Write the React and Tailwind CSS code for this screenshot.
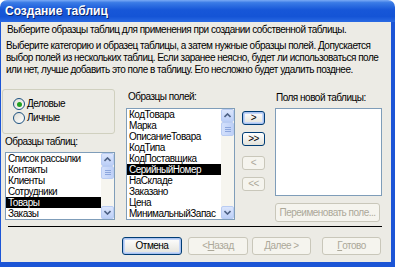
const FONT = "font-['Liberation_Sans',Arial,sans-serif]";

function Arrow({ up }) {
  return (
    <div className="flex h-[13px] w-[13px] items-center justify-center rounded-[2px] border border-[#B9CCF3] bg-[linear-gradient(to_bottom,#DCE6FC,#BCCFF7)]">
      <svg width="7" height="5" viewBox="0 0 7 5">
        <path
          d={up ? "M0.5 4 L3.5 1 L6.5 4" : "M0.5 1 L3.5 4 L6.5 1"}
          fill="none"
          stroke="#4D6185"
          strokeWidth="1.6"
        />
      </svg>
    </div>
  );
}

function ScrollBar({ thumb }) {
  return (
    <div className="flex h-full w-[13px] shrink-0 flex-col bg-[#F6F5EF]">
      <Arrow up />
      <div
        className="flex flex-col items-center justify-center gap-[1px] rounded-[2px] border border-[#B9CCF3] bg-[linear-gradient(to_right,#D3E0FB,#BED0F7)]"
        style={{ height: thumb }}
      >
        <div className="h-px w-[6px] bg-[#8CA6DD]" />
        <div className="h-px w-[6px] bg-[#8CA6DD]" />
        <div className="h-px w-[6px] bg-[#8CA6DD]" />
      </div>
      <div className="flex-1" />
      <Arrow />
    </div>
  );
}

function ListBox({ items, selected, thumb, className }) {
  return (
    <div className={`flex overflow-hidden border border-[#7F9DB9] bg-white ${className}`}>
      <div className="flex-1 overflow-hidden">
        {items.map((t, i) => (
          <div
            key={t}
            className={`h-[11px] whitespace-nowrap pl-[2px] leading-[11px] ${
              i === selected ? "bg-black text-white" : "text-black"
            }`}
          >
            {t}
          </div>
        ))}
      </div>
      {thumb && <ScrollBar thumb={thumb} />}
    </div>
  );
}

function Btn({ children, disabled, focus, className = "" }) {
  const base = "flex items-center justify-center whitespace-nowrap rounded-[3px] border leading-none";
  const look = disabled
    ? "border-[#C9C7BA] bg-[#F5F4EE] text-[#ACA899]"
    : focus
    ? "border-[#003C74] bg-[linear-gradient(to_bottom,#FFFFFF,#E3E2DA)] text-black shadow-[inset_0_0_0_1px_#A8C2F0,inset_0_0_0_2px_#C6D7F8]"
    : "border-[#003C74] bg-[linear-gradient(to_bottom,#FFFFFF,#E3E2DA)] text-black";
  return <div className={`${base} ${look} ${className}`}>{children}</div>;
}

function Radio({ checked, label }) {
  return (
    <div className="flex h-[14px] items-center">
      <div className="ml-[10px] flex h-[12px] w-[12px] items-center justify-center rounded-full border border-[#1C5180] bg-[linear-gradient(135deg,#DCDCD5,#FFFFFF)]">
        {checked && <div className="h-[5px] w-[5px] rounded-full bg-[#21A121]" />}
      </div>
      <span className="ml-[2px]">{label}</span>
    </div>
  );
}

export default function App() {
  return (
    <div className={`flex h-[267px] w-[395px] flex-col overflow-hidden ${FONT} text-black`}>
      <div className="flex h-[22px] shrink-0 items-center rounded-t-[7px] bg-[linear-gradient(to_bottom,#7AAAF5_0%,#3A7BE6_12%,#1757D8_45%,#1454D6_75%,#2A6AE3_100%)] pl-[5px]">
        <span className="text-[12px] font-bold text-white [text-shadow:1px_1px_0_#0A246A]">
          Создание таблиц
        </span>
      </div>
      <div className="flex flex-1 flex-col overflow-hidden border-b-[5px] border-l border-r-4 border-[#1C55D6] bg-[#ECEBE5] text-[10px] leading-[12px] tracking-[-0.5px]">
        <div className="mt-[2px] whitespace-nowrap pl-[6px]">
          Выберите образцы таблиц для применения при создании собственной таблицы.
        </div>
        <div className="mt-[4px] whitespace-nowrap pl-[5px]">
          <div>Выберите категорию и образец таблицы, а затем нужные образцы полей. Допускается</div>
          <div>выбор полей из нескольких таблиц. Если заранее неясно, будет ли использоваться поле</div>
          <div>или нет, лучше добавить это поле в таблицу. Его несложно будет удалить позднее.</div>
        </div>

        <div className="mt-[12px] flex h-[134px] items-start pl-[1px]">
          <div className="flex w-[113px] flex-col">
            <div className="mt-[1px] flex h-[45px] flex-col rounded-[3px] border border-[#D0D0BF] pt-[7px]">
              <Radio checked label="Деловые" />
              <Radio label="Личные" />
            </div>
            <div className="ml-[3px] mt-[2px] h-[12px]">Образцы таблиц:</div>
            <ListBox
              className="ml-[3px] mt-[4px] h-[68px] w-[110px]"
              items={["Список рассылки", "Контакты", "Клиенты", "Сотрудники", "Товары", "Заказы"]}
              selected={4}
              thumb={13}
            />
          </div>

          <div className="ml-[11px] flex w-[109px] flex-col">
            <div className="ml-[2px] mt-[3px] h-[12px]">Образцы полей:</div>
            <ListBox
              className="mt-[5px] h-[112px] w-[109px]"
              items={[
                "КодТовара",
                "Марка",
                "ОписаниеТовара",
                "КодТипа",
                "КодПоставщика",
                "СерийныйНомер",
                "НаСкладе",
                "Заказано",
                "Цена",
                "МинимальныйЗапас",
              ]}
              selected={5}
              thumb={14}
            />
          </div>

          <div className="ml-[7px] mt-[23px] flex w-[23px] flex-col">
            <Btn focus className="h-[14px]">&gt;</Btn>
            <Btn className="mt-[7px] h-[14px]">&gt;&gt;</Btn>
            <Btn disabled className="mt-[10px] h-[14px]">&lt;</Btn>
            <Btn disabled className="mt-[7px] h-[14px]">&lt;&lt;</Btn>
          </div>

          <div className="ml-[10px] flex w-[107px] flex-col">
            <div className="ml-[1px] mt-[4px] h-[12px] whitespace-nowrap">Поля новой таблицы:</div>
            <div className="mt-[4px] h-[88px] border border-[#7F9DB9] bg-white" />
            <Btn disabled className="mt-[7px] h-[19px] w-[105px]">
              Переименовать поле...
            </Btn>
          </div>
        </div>

        <div className="ml-[7px] mt-[4px] h-px w-[374px] bg-black" />

        <div className="ml-[121px] mt-[10px] flex h-[18px]">
          <Btn focus className="w-[60px]">Отмена</Btn>
          <Btn disabled className="ml-[6px] w-[60px]">&lt; <span className="underline">Н</span>азад</Btn>
          <Btn disabled className="ml-[4px] w-[59px]"><span className="underline">Д</span>алее &gt;</Btn>
          <Btn disabled className="ml-[11px] w-[59px]"><span className="underline">Г</span>отово</Btn>
        </div>
      </div>
    </div>
  );
}
